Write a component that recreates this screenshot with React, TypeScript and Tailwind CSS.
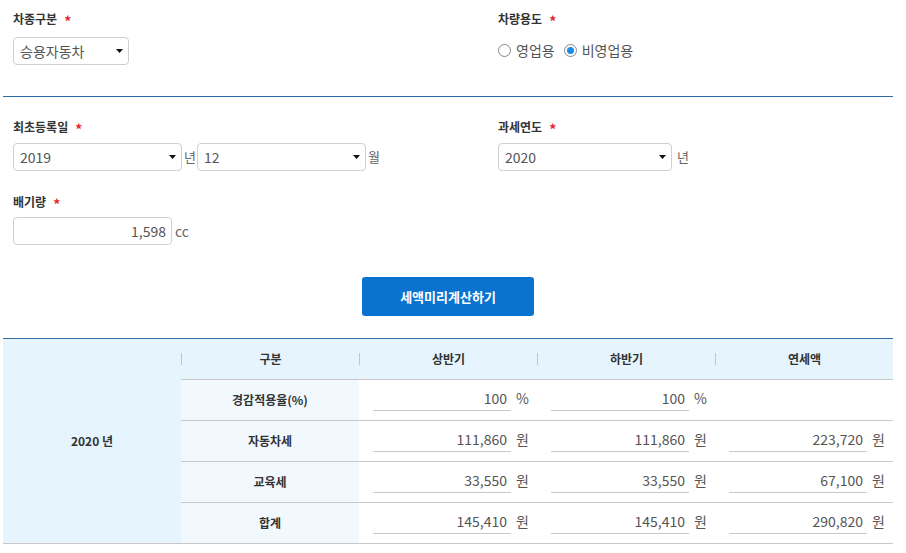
import React from "react";

const font = { fontFamily: '"Noto Sans CJK KR", "Noto Sans", sans-serif' };

function Label({ text }: { text: string }) {
  return (
    <div className="flex h-[16px] items-center text-[12px] font-bold text-[#333] leading-none">
      <span>{text}</span>
      <span className="ml-[7px] mt-[3px] text-[14px] text-[#e8242c]">*</span>
    </div>
  );
}

function Caret() {
  return (
    <svg width="7" height="4" viewBox="0 0 7 4" className="shrink-0">
      <path d="M0 0h7L3.5 4z" fill="#111" />
    </svg>
  );
}

function SelectBox({ value, width }: { value: string; width: string }) {
  return (
    <div
      className={`flex h-[28px] items-center justify-between rounded-[4px] border border-[#cfcfcf] bg-white pl-[6px] pr-[5px] text-[14px] text-[#555] ${width}`}
    >
      <span>{value}</span>
      <Caret />
    </div>
  );
}

function Radio({ checked, label }: { checked?: boolean; label: string }) {
  return (
    <label className="flex items-center gap-[5px] text-[14px] text-[#555]">
      <span className="flex h-[13px] w-[13px] items-center justify-center rounded-full border border-[#888] bg-white">
        {checked && <span className="h-[7px] w-[7px] rounded-full bg-[#1a8ce8]" />}
      </span>
      <span>{label}</span>
    </label>
  );
}

function ValueCell({ value, unit }: { value?: string; unit?: string }) {
  return (
    <div className="flex h-full w-[178px] items-end pb-[9px] pl-[14px]">
      {value !== undefined && (
        <div className="flex items-center">
          <div className="flex h-[25px] w-[138px] items-center justify-end border-b border-[#c8c8c8] pr-[4px] text-[14px] text-[#555]">
            {value}
          </div>
          <span className="ml-[5px] text-[14px] text-[#555]">{unit}</span>
        </div>
      )}
    </div>
  );
}

const rows = [
  { name: "경감적용율(%)", a: "100", b: "100", c: undefined, unit: "%" },
  { name: "자동차세", a: "111,860", b: "111,860", c: "223,720", unit: "원" },
  { name: "교육세", a: "33,550", b: "33,550", c: "67,100", unit: "원" },
  { name: "합계", a: "145,410", b: "145,410", c: "290,820", unit: "원" },
];

function HeadCell({ text }: { text: string }) {
  return (
    <div className="flex h-full w-[178px] items-center">
      <div className="h-[12px] w-px bg-[#c4c4c4]" />
      <div className="flex-1 text-center text-[12px] font-bold text-[#333]">{text}</div>
    </div>
  );
}

export default function App() {
  return (
    <div className="min-h-screen w-[906px] bg-white" style={font}>
      <div className="mx-[3px] w-[890px]">
        {/* 차종 / 용도 */}
        <div className="flex border-b border-[#2c6da5] pb-[31px] pt-[11px]">
          <div className="w-[495px] pl-[10px]">
            <Label text="차종구분" />
            <div className="mt-[10px]">
              <SelectBox value="승용자동차" width="w-[116px]" />
            </div>
          </div>
          <div>
            <Label text="차량용도" />
            <div className="mt-[10px] flex h-[27px] items-center gap-[9px]">
              <Radio label="영업용" />
              <Radio label="비영업용" checked />
            </div>
          </div>
        </div>

        {/* 등록일 / 과세연도 / 배기량 */}
        <div className="flex pt-[22px]">
          <div className="w-[495px] pl-[10px]">
            <Label text="최초등록일" />
            <div className="mt-[8px] flex items-center text-[13px] text-[#666]">
              <SelectBox value="2019" width="w-[169px]" />
              <span className="ml-[2px] mr-[1px]">년</span>
              <SelectBox value="12" width="w-[169px]" />
              <span className="ml-[2px]">월</span>
            </div>
            <div className="mt-[23px]">
              <Label text="배기량" />
            </div>
            <div className="mt-[7px] flex items-center text-[14px] text-[#666]">
              <div className="flex h-[28px] w-[159px] items-center justify-end rounded-[4px] border border-[#cfcfcf] pr-[5px] text-[#555]">
                1,598
              </div>
              <span className="ml-[3px]">cc</span>
            </div>
          </div>
          <div>
            <Label text="과세연도" />
            <div className="mt-[8px] flex items-center text-[13px] text-[#666]">
              <SelectBox value="2020" width="w-[174px]" />
              <span className="ml-[5px]">년</span>
            </div>
          </div>
        </div>

        <div className="mt-[32px] flex justify-center">
          <button className="h-[39px] w-[172px] rounded-[3px] bg-[#0a73cf] text-[13px] font-bold text-white">
            세액미리계산하기
          </button>
        </div>

        {/* 결과 표 */}
        <div className="mt-[22px] flex border-t border-[#2c6da5] border-b border-b-[#c8c8c8]">
          <div className="flex w-[178px] items-center justify-center bg-[#e6f4fd] text-[12px] font-bold text-[#333]">
            2020 년
          </div>
          <div className="flex-1">
            <div className="flex h-[41px] border-b border-[#c8c8c8] bg-[#e6f4fd]">
              <HeadCell text="구분" />
              <HeadCell text="상반기" />
              <HeadCell text="하반기" />
              <HeadCell text="연세액" />
            </div>
            {rows.map((r, i) => (
              <div
                key={r.name}
                className={`flex ${i < rows.length - 1 ? "h-[41px] border-b border-[#c8c8c8]" : "h-[40px]"}`}
              >
                <div className="flex w-[178px] items-center justify-center bg-[#f1f8fe] text-[12px] font-bold text-[#333]">
                  {r.name}
                </div>
                <ValueCell value={r.a} unit={r.unit} />
                <ValueCell value={r.b} unit={r.unit} />
                <ValueCell value={r.c} unit={r.unit} />
              </div>
            ))}
          </div>
        </div>
      </div>
    </div>
  );
}
